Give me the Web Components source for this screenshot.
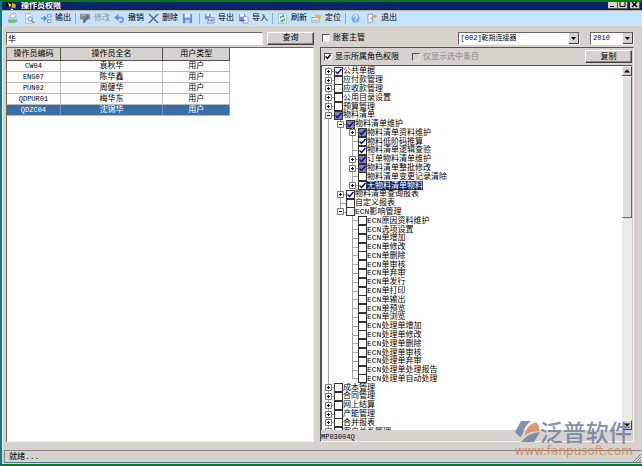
<!DOCTYPE html>
<html lang="zh-CN">
<head>
<meta charset="utf-8">
<title>操作员权限</title>
<style>
  body { margin: 0; }
</style>
</head>
<body>
<app-window></app-window>

<script>
const FONT = '"Liberation Mono", "Noto Sans CJK SC", monospace';

function define(name, markup, setup) {
  const template = document.createElement('template');
  template.innerHTML = markup;
  customElements.define(name, class extends HTMLElement {
    connectedCallback() {
      if (this.shadowRoot) return;
      const root = this.attachShadow({ mode: 'open' });
      root.append(template.content.cloneNode(true));
      if (setup) setup(this, root);
    }
  });
}

const svg = body => `<svg viewBox="0 0 12 12" aria-hidden="true">${body}</svg>`;
const ICONS = {
  app: svg('<path d="M0 1h6v5H0z" fill="#111"/><path d="M2 2l4 2-2 3z" fill="#f4e61c"/><path d="M7 2l4 2-1 4-4-1z" fill="#c9b72a"/><path d="M5 8l3 1-2 3z" fill="#eee"/>'),
  print: svg('<path d="M5 1h5l-1 4H3z" fill="#fff" stroke="#7d93b4" stroke-width=".7"/><path d="M1 5h10v5H1z" fill="#8fa3bf"/><path d="M1 5h10v2H1z" fill="#c8d4e4"/><path d="M3 8h6v3H2z" fill="#6fc06a"/>'),
  preview: svg('<path d="M2 1h5l2 2v8H2z" fill="#fff" stroke="#8ea3c2" stroke-width=".8"/><circle cx="6.5" cy="6.5" r="2.4" fill="#d7ecff" stroke="#6887b0"/><path d="M8 8l3 3" stroke="#c69348" stroke-width="1.8"/>'),
  output: svg('<path d="M0 6h5M3 3.500L5.500 6 3 8.500" fill="none" stroke="#5c85d7" stroke-width="1.600"/><path d="M7 1.500h4v3H7zM7 7.500h4v3H7z" fill="#eaf4ff" stroke="#6f95d7"/>'),
  edit: svg('<path d="M0 1h11v6H0z" fill="#8b8b8b"/><path d="M10 3L6 10l-3 1 .5-4L8 3z" fill="#6f6f6f"/><path d="M1 2.500h5" stroke="#b4b4b4"/>'),
  undo: svg('<path d="M3 5h5q2 0 2 2t-2 3H6" fill="none" stroke="#6d8fe0" stroke-width="1.8"/><path d="M5 1v8L0 5z" fill="#6d8fe0"/>'),
  remove: svg('<path d="M1 1l10 10M11 1L1 11" stroke="#5c6573" stroke-width="1.500"/>'),
  save: svg('<path d="M1 1h10v10H1z" fill="#6b86d0"/><path d="M3 1h6v4H3z" fill="#e9f1ff"/><path d="M3.500 7h5v4h-5z" fill="#b9cbee"/>'),
  exportData: svg('<path d="M1 1h6v6H1z" fill="#8093d2"/><path d="M2.500 1h3v2h-3z" fill="#fff"/><path d="M5 5h6v6H4z" fill="#e5e8fa" stroke="#6c7ab7" stroke-width=".8"/><path d="M5 8h4M8 6l2 2-2 2" fill="none" stroke="#5666b5"/>'),
  importData: svg('<path d="M1 1h7v8H1z" fill="#8093d2"/><path d="M2.500 1h4v3h-4z" fill="#fff"/><path d="M6 4h4l1 1v6H6z" fill="#f4f6ff" stroke="#7d8abb" stroke-width=".8"/><path d="M2 8h6M5 6L3 8l2 2" fill="none" stroke="#4656a5"/>'),
  refresh: svg('<path d="M1.500 1h7l2 2v8h-9z" fill="#f3fbf6" stroke="#8fa7c8" stroke-width=".8"/><path d="M3.500 6q0-2.500 3-2.500M8.500 6q0 2.500-3 2.500" fill="none" stroke="#35a04a" stroke-width="1.200"/><path d="M6 1.500v4l2.500-2zM6 6.500v4l-2.500-2z" fill="#35a04a"/>'),
  locate: svg('<path d="M1 5h8v5H1z" fill="#f4efe2" stroke="#9a947f" stroke-width=".8"/><path d="M4 2h7v4H7L5 5z" fill="#eeb75b"/><path d="M2.500 8h5" stroke="#8fa0bd"/>'),
  help: svg('<circle cx="6" cy="6" r="4.500" fill="#7ba7f0"/><path d="M4.200 4.800q.2-2 2-2 1.800.2 1.600 1.800-.2 1-1.600 1.800v.8M6.200 8.300v1.300" fill="none" stroke="#fff" stroke-width="1.200"/>'),
  exit: svg('<path d="M1 2l5-1v9l-5 1z" fill="#f6f8ff" stroke="#7488b7" stroke-width=".8"/><path d="M6 4h3" stroke="#d9912f"/><path d="M8 1l3 2.500L8 6z" fill="#ee9b34"/><circle cx="4.600" cy="6" r=".7" fill="#5870ad"/>')
};

define('tool-button', `
  <style>
    :host { display: block; }
    button { display: flex; align-items: center; gap: 3px; height: 14px; margin: 0; padding: 0; border: 0;
      background: none; color: #000; font: 8px/12px ${FONT}; white-space: nowrap; }
    button:disabled { color: #8a97a4; }
    #icon, svg { display: block; width: 11px; height: 11px; }
  </style>
  <button type="button"><span id="icon"></span><slot></slot></button>`,
  (host, root) => {
    root.getElementById('icon').innerHTML = ICONS[host.getAttribute('icon')];
    const button = root.querySelector('button');
    button.disabled = host.hasAttribute('disabled');
    if (host.hasAttribute('hint')) button.setAttribute('aria-label', host.getAttribute('hint'));
  });

define('tool-bar', `
  <style>
    :host { display: flex; align-items: center; gap: 4px; box-sizing: border-box; height: 16px; padding: 0 5px;
      background: #c5e3ff; border-top: 1px solid #b9b2a8; border-bottom: 1px solid #dbe7f2; overflow: hidden; }
    i { flex: none; width: 1px; height: 11px; background: #8fa8c2; }
    .wide { margin-right: 2px; }
  </style>
  <tool-button icon="print" hint="打印" class="wide"></tool-button>
  <tool-button icon="preview" hint="预览" class="wide"></tool-button>
  <tool-button icon="output">输出</tool-button>
  <i></i>
  <tool-button icon="edit" disabled>修改</tool-button>
  <tool-button icon="undo">撤销</tool-button>
  <tool-button icon="remove">删除</tool-button>
  <tool-button icon="save" hint="保存" class="wide"></tool-button>
  <i></i>
  <tool-button icon="exportData">导出</tool-button>
  <tool-button icon="importData">导入</tool-button>
  <i></i>
  <tool-button icon="refresh">刷新</tool-button>
  <tool-button icon="locate">定位</tool-button>
  <i></i>
  <tool-button icon="help" hint="帮助" class="wide"></tool-button>
  <tool-button icon="exit">退出</tool-button>`);

define('title-bar', `
  <style>
    :host { display: flex; align-items: center; height: 8px; padding: 0 2px 0 4px; gap: 4px; background: #08246b; overflow: hidden; }
    h1 { flex: 1; margin: 0; color: #fff; font: bold 8px/8px ${FONT}; }
    #icon, svg { display: block; width: 11px; height: 11px; }
    nav { display: flex; align-self: flex-start; }
    nav button { display: block; width: 10px; height: 7px; padding: 0; background: #d6d3ce; border: 0; 
      border-right: 1px solid #55524e; border-bottom: 1px solid #55524e; }
    nav button:last-child { margin-left: 2px; }
    nav svg { width: 9px; height: 6px; }
  </style>
  <span id="icon">${ICONS.app}</span>
  <h1>操作员权限</h1>
  <nav>
    <button type="button" aria-label="最小化"><svg viewBox="0 0 9 6"><path d="M2 4h4v1H2z"/></svg></button>
    <button type="button" aria-label="最大化"><svg viewBox="0 0 9 6"><path d="M2 0v4.500h5V0" fill="none" stroke="#000"/></svg></button>
    <button type="button" aria-label="关闭"><svg viewBox="0 0 9 6"><path d="M2 5l5-5M2 0l5 5" stroke="#000" stroke-width="1.500"/></svg></button>
  </nav>`);

define('push-button', `
  <style>
    :host { display: block; flex: none; width: 47px; }
    button { display: block; box-sizing: border-box; width: 100%; height: 13px; padding: 0; background: #d6d3ce;
      border: 1px solid; border-color: #fff #404040 #404040 #fff; box-shadow: inset -1px -1px #8a8680;
      color: #000; font: 8px/10px ${FONT}; text-align: center; }
  </style>
  <button type="button"><slot></slot></button>`);

define('check-field', `
  <style>
    :host { display: block; }
    label { display: flex; align-items: center; gap: 3px; color: #000; font: 8px/12px ${FONT}; white-space: nowrap; }
    :host([disabled]) label { color: #8a8680; }
    input { appearance: none; box-sizing: border-box; width: 8px; height: 8px; margin: 0; background: #fff;
      border: 1px solid; border-color: #55524e #e8e6e2 #e8e6e2 #55524e; }
    input:disabled { background: #d6d3ce; }
    input:checked { background: #fff url('data:image/svg+xml,<svg xmlns="http://www.w3.org/2000/svg" viewBox="0 0 6 6"><path d="M.5 2.500l2 2 3-4" fill="none" stroke="black" stroke-width="1.300"/></svg>'); }
  </style>
  <label><input type="checkbox"><slot></slot></label>`,
  (host, root) => {
    const input = root.querySelector('input');
    input.checked = host.hasAttribute('checked');
    input.disabled = host.hasAttribute('disabled');
  });

define('combo-box', `
  <style>
    :host { display: block; }
    select { appearance: none; display: block; box-sizing: border-box; width: 100%; height: 13px; margin: 0; padding: 0 12px 0 2px;
      border: 1px solid; border-color: #6b6863 #f4f3f0 #f4f3f0 #6b6863; border-radius: 0; color: #000; font: 7px/10px ${FONT};
      background: #fff url('data:image/svg+xml,<svg xmlns="http://www.w3.org/2000/svg" width="10" height="11"><path fill="%23d6d3ce" d="M0 0h10v11H0z"/><path fill="none" stroke="%23404040" d="M9.500 0v10.500H0"/><path d="M2 4h5L4.500 7z"/></svg>') right center no-repeat; }
  </style>
  <select><option></option></select>`,
  (host, root) => {
    root.querySelector('select').setAttribute('aria-label', host.getAttribute('name'));
    root.querySelector('option').textContent = host.getAttribute('value');
  });

define('operator-table', `
  <style>
    :host { display: block; flex: 1; min-height: 0; overflow: hidden; background: #fff;
      border: 1px solid; border-color: #6b6863 #f4f3f0 #f4f3f0 #6b6863; }
    table { width: 73%; border-collapse: collapse; table-layout: fixed; color: #000; font: 8px/10px ${FONT}; text-align: center;
      border-right: 1px solid #404040; border-bottom: 1px solid #404040; }
    th, td { height: 10px; padding: 0; border-right: 1px solid #bdbab5; border-bottom: 1px solid #bdbab5; font-weight: normal; white-space: nowrap; }
    th { height: 12px; background: #d6d3ce; border-color: #55524e; }
    td:first-child { font-size: 7px; }
    tr[aria-selected] td { background: #3a6ea5; color: #fff; border-right-color: #6f97c0; }
    .code { width: 24%; } .name { width: 46%; } .type { width: 30%; }
  </style>
  <table>
    <thead><tr><th class="code">操作员编码</th><th class="name">操作员全名</th><th class="type">用户类型</th></tr></thead>
    <tbody></tbody>
  </table>`,
  (host, root) => {
    const rows = [['CW04', '袁秋华'], ['ENG07', '陈华鑫'], ['PUN02', '周健华'], ['QDPUR01', '梅华东'], ['QDZC04', '沈锦华']];
    root.querySelector('tbody').innerHTML = rows.map(([code, name], i) =>
      `<tr${i === 4 ? ' aria-selected="true"' : ''}><td>${code}</td><td>${name}</td><td>用户</td></tr>`).join('');
  });

define('tree-row', `
  <style>
    :host { display: flex; align-items: stretch; min-height: 0; color: #000; font: 8px/8px ${FONT}; white-space: nowrap; }
    .cell { flex: none; display: flex; align-items: center; width: 12px; padding-left: 3px; box-sizing: border-box;
      --v: linear-gradient(#a5a5a5, #a5a5a5); background-repeat: no-repeat; }
    .pass { background-image: var(--v); background-size: 1px 100%; background-position: 6px 0; }
    .tee { background-image: var(--v), var(--v); background-size: 1px 100%, 6px 1px; background-position: 6px 0, 6px 4px; }
    .end { background-image: var(--v), var(--v); background-size: 1px 5px, 6px 1px; background-position: 6px 0, 6px 4px; }
    button { display: block; width: 7px; height: 7px; padding: 0; border: 0; background: none; }
    svg { display: block; width: 7px; height: 7px; }
    label { display: flex; align-items: center; }
    input { appearance: none; flex: none; box-sizing: border-box; width: 9px; height: 9px; margin: 0; border: 1px solid #333; background: #fff; }
    input:checked { background: #fff url('data:image/svg+xml,<svg xmlns="http://www.w3.org/2000/svg" viewBox="0 0 7 7"><path d="M.5 3.500l2 2L6.500 1" fill="none" stroke="%230000e8" stroke-width="1.500"/></svg>'); }
    :host([partial]) input { background-color: #85858a; }
    :host([selected]) { position: relative; z-index: 1; }
    :host([selected]) span { background: #08246b; color: #fff; line-height: 9px; }
  </style>
  <label><input type="checkbox"><span><slot></slot></span></label>`,
  (host, root) => {
    const guides = host.getAttribute('guides').split(' ');
    const toggle = host.getAttribute('toggle');
    const label = root.querySelector('label');
    guides.forEach((kind, i) => {
      const cell = document.createElement('div');
      cell.className = 'cell ' + kind;
      if (toggle && i === guides.length - 1) {
        const name = toggle === '+' ? '展开' : '折叠';
        cell.innerHTML = `<button type="button" aria-label="${name}"><svg viewBox="0 0 7 7"><path d="M.5.5h6v6h-6z" fill="#fff" stroke="#777"/><path d="M2 3.500h3${toggle === '+' ? 'M3.500 2v3' : ''}" stroke="#000"/></svg></button>`;
      }
      label.before(cell);
    });
    root.querySelector('input').checked = host.hasAttribute('checked');
  });

/* Entries: depth, toggle sign, check state (v ticked, p ticked on grey), label */
const TREE = `0+v公共单据
0+ 应付款管理
0+ 应收款管理
0+ 公用目录设置
0+ 预算管理
0-p物料清单
1-p物料清单维护
2+p物料清单资料维护
2 v物料低阶码推算
2 v物料清单逻辑查验
2+p订单物料清单维护
2+p物料清单整批修改
2  物料清单变更记录清除
2+v无物料清单物料
1+v物料清单查询报表
1  自定义报表
1- ECN影响管理
2  ECN原因资料维护
2  ECN选项设置
2  ECN单增加
2  ECN单修改
2  ECN单删除
2  ECN单审核
2  ECN单弃审
2  ECN单发行
2  ECN单打印
2  ECN单输出
2  ECN单预览
2  ECN单浏览
2  ECN处理单增加
2  ECN处理单修改
2  ECN处理单删除
2  ECN处理单审核
2  ECN处理单弃审
2  ECN处理单处理报告
2  ECN处理单自动处理
0+ 成本管理
0+ 合同管理
0+ 网上结算
0+ 产能管理
0+ 合并报表
0+ 客户关系管理`.split('\n').map(line => ({ depth: +line[0], toggle: line[1].trim(), state: line[2], text: line.slice(3) }));

define('permission-tree', `
  <style>
    :host { display: flex; flex: 1; min-height: 0; overflow: hidden; background: #fff; border-top: 1px solid #55524e; border-left: 1px solid #55524e; }
    #rows { flex: 1; display: grid; grid-auto-rows: minmax(0, 1fr); height: 369px; min-width: 0; padding-top: 1px; }
    #bar { display: flex; flex-direction: column; flex: none; width: 10px; background: #eceae6; }
    #bar button, #thumb { display: grid; place-items: center; box-sizing: border-box; flex: none; width: 10px; height: 10px; padding: 0; background: #d6d3ce;
      border: 1px solid; border-color: #f4f3f0 #404040 #404040 #f4f3f0; }
    #bar #thumb { height: 39%; background: #e2e0dc; border-color: #fff #6b6863 #6b6863 #fff; }
    #gap { flex: 1; }
    svg { display: block; width: 6px; height: 4px; }
  </style>
  <div id="rows"></div>
  <div id="bar">
    <button type="button" aria-label="向上滚动"><svg viewBox="0 0 6 4"><path d="M0 3.500h6L3 .5z"/></svg></button>
    <div id="thumb"></div><div id="gap"></div>
    <button type="button" aria-label="向下滚动"><svg viewBox="0 0 6 4"><path d="M0 .5h6l-3 3z"/></svg></button>
  </div>`,
  (host, root) => {
    const continues = (index, depth) => {
      for (let i = index + 1; i < TREE.length && TREE[i].depth >= depth; i++) if (TREE[i].depth === depth) return true;
      return false;
    };
    const rows = root.getElementById('rows');
    TREE.forEach((entry, index) => {
      const row = document.createElement('tree-row');
      const guides = [];
      for (let d = 0; d <= entry.depth; d++) {
        const more = continues(index, d);
        guides.push(d < entry.depth ? (more ? 'pass' : 'blank') : (more ? 'tee' : 'end'));
      }
      row.setAttribute('guides', guides.join(' '));
      row.setAttribute('toggle', entry.toggle);
      if (entry.state !== ' ') row.setAttribute('checked', '');
      if (entry.state === 'p') row.setAttribute('partial', '');
      if (entry.text === '无物料清单物料') row.setAttribute('selected', '');
      row.textContent = entry.text;
      rows.append(row);
    });
  });

define('permission-panel', `
  <style>
    :host { display: flex; flex-direction: column; flex: 1; min-height: 0; border: 1px solid; border-color: #55524e #f4f3f0 #f4f3f0 #55524e; padding-right: 1px; }
    header { display: flex; align-items: center; gap: 13px; height: 17px; padding: 0 0 0 3px; }
    push-button { margin-left: auto; }
    footer { padding-top: 3px; font: 7px/8px ${FONT}; color: #000; }
  </style>
  <header>
    <check-field checked>显示所属角色权限</check-field>
    <check-field disabled>仅显示选中条目</check-field>
    <push-button>复制</push-button>
  </header>
  <permission-tree></permission-tree>
  <footer>MP03004Q</footer>`);

define('status-bar', `
  <style>
    :host { display: flex; align-items: center; box-sizing: border-box; height: 13px; margin-left: 2px; padding-left: 4px;
      border: 1px solid; border-color: #8a8680 #d6d3ce #eceae6 #8a8680; color: #000; font: 8px/10px ${FONT}; }
    span { flex: 1; }
    svg { align-self: flex-end; width: 8px; height: 8px; }
  </style>
  <span><slot></slot></span>
  <svg viewBox="0 0 8 8" aria-hidden="true"><path d="M0 8l8-8M3 8l5-5M6 8l2-2" stroke="#8a8680"/></svg>`);

define('brand-mark', `
  <style>
    :host { display: grid; grid-template-columns: 25px auto; justify-content: end; opacity: .85; pointer-events: none; white-space: nowrap; }
    svg { display: block; width: 26px; height: 25px; }
    b { color: #7180a2; font: 500 23px/25px "Noto Sans CJK SC", sans-serif; }
    small { grid-column: 1 / -1; color: #d9825f; font: 12px/14px "DejaVu Sans", sans-serif; text-align: right; }
  </style>
  <svg viewBox="0 0 26 25" aria-hidden="true">
    <path d="M6 2h10Q9 8 8 14q-1 3-3 4L0 13z" fill="#7180a2"/>
    <path d="M21 3q4 4 3 9-8 0-14 4 1-10 11-13z" fill="#dc8360"/>
    <path d="M6 23q7-9 19-10l-6 10z" fill="#7180a2"/>
  </svg>
  <b>泛普软件</b>
  <small>www.fanpusoft.com</small>`);

define('app-window', `
  <style>
    :host { position: relative; display: flex; flex-direction: column; box-sizing: border-box; height: 100vh; overflow: hidden; background: #d6d3ce;
      border-top: 2px solid #008000; border-left: 2px solid #1b7480; border-bottom: 2px solid #0a7a28; }
    main { flex: 1; min-height: 0; display: grid; grid-template-columns: 308fr 314fr; gap: 6px; padding: 5px 8px 8px 3px; 
      border-left: 1px solid #f4f3f0; }
    section { display: flex; flex-direction: column; gap: 2px; min-width: 0; min-height: 0; }
    .fields { display: flex; align-items: center; height: 14px; gap: 4px; }
    input { flex: 1; min-width: 0; box-sizing: border-box; height: 13px; margin: 0; padding: 0 1px; background: #fff; color: #000;
      border: 1px solid; border-color: #6b6863 #f4f3f0 #f4f3f0 #6b6863; font: 8px/10px ${FONT}; }
    check-field { flex: 1; padding-left: 2px; }
    .book { width: 39%; margin-right: 6px; }
    .year { width: 14%; }
    status-bar { border-bottom: 1px solid #5c7590; margin-bottom: 1px; }
    brand-mark { position: absolute; right: 9px; bottom: 6px; }
  </style>
  <title-bar></title-bar>
  <tool-bar></tool-bar>
  <main>
    <section>
      <div class="fields"><input type="text" value="华" aria-label="操作员"><push-button>查询</push-button></div>
      <operator-table></operator-table>
    </section>
    <section>
      <div class="fields">
        <check-field>账套主管</check-field>
        <combo-box class="book" name="账套" value="[002]乾朔连接器"></combo-box>
        <combo-box class="year" name="年度" value="2010"></combo-box>
      </div>
      <permission-panel></permission-panel>
    </section>
  </main>
  <status-bar>就绪...</status-bar>
  <brand-mark></brand-mark>`);
</script>
</body>
</html>
